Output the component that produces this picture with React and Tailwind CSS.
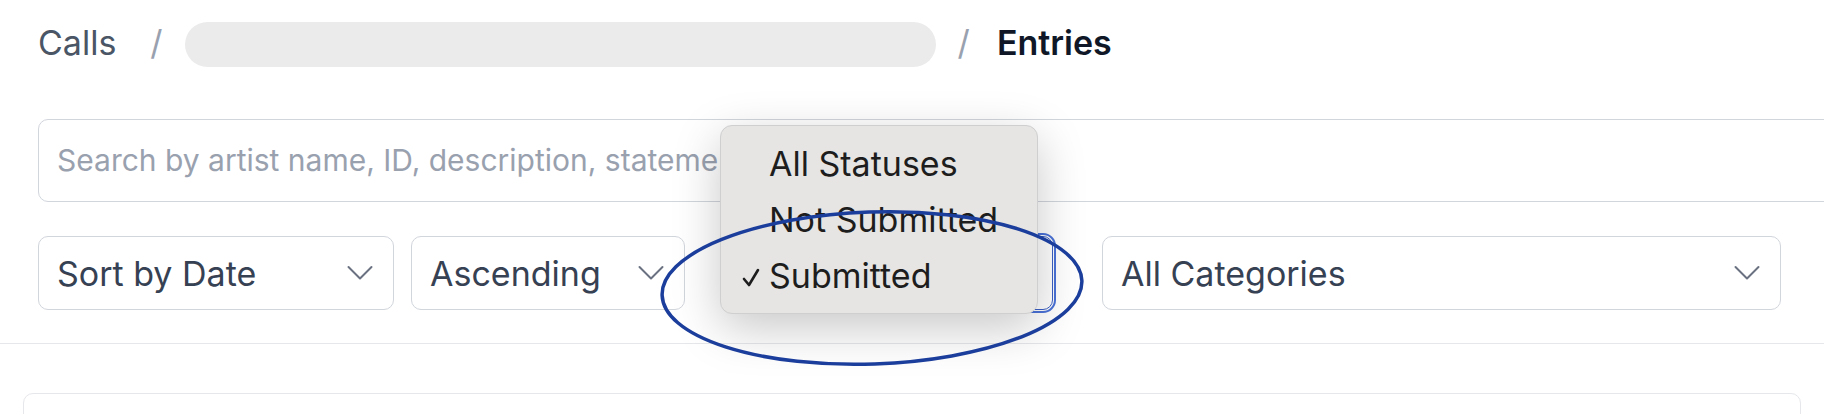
import React from 'react';

const Chevron = ({ className = '' }) => (
  <svg className={className} width="26" height="16" viewBox="0 0 26 16" fill="none">
    <path d="M1.5 2 L13 13.5 L24.5 2" stroke="currentColor" strokeWidth="2" strokeLinecap="round" strokeLinejoin="round" />
  </svg>
);

const SelectBox = ({ label, width, focused = false, className = '' }) => (
  <div
    className={`relative flex h-[74px] shrink-0 items-center justify-between rounded-[10px] border bg-white pl-[18px] pr-[20px] ${
      focused ? 'border-[#3b5fc4] outline outline-2 outline-offset-1 outline-[#4a72d8]' : 'border-gray-300'
    } ${className}`}
    style={{ width }}
  >
    <span className="text-[34px] text-gray-700">{label}</span>
    <Chevron className="text-gray-500" />
  </div>
);

const App = () => {
  const statuses = ['All Statuses', 'Not Submitted', 'Submitted'];

  return (
    <div className="relative h-[414px] w-[1824px] overflow-hidden bg-white" style={{ fontFamily: 'Inter, "Noto Sans", sans-serif' }}>
      <div className="px-[38px] pt-[22px] pb-[33px] border-b border-gray-200">
        {/* breadcrumb */}
        <div className="flex h-[45px] items-center">
          <span className="mb-[5px] text-[34px] text-gray-600">Calls</span>
          <span className="mb-[5px] ml-[34px] text-[34px] text-gray-400">/</span>
          <div className="ml-[22px] h-[45px] w-[751px] rounded-full bg-[#ebebeb]" />
          <span className="mb-[5px] ml-[22px] text-[34px] text-gray-400">/</span>
          <span className="mb-[5px] ml-[27px] text-[34px] font-semibold text-gray-900">Entries</span>
        </div>

        {/* search */}
        <div className="mt-[52px] flex h-[83px] w-[1860px] items-center rounded-[10px] border border-gray-300 pl-[18px]">
          <span className="whitespace-nowrap text-[30px] text-gray-400">Search by artist name, ID, description, statement...</span>
        </div>

        {/* filters */}
        <div className="mt-[34px] flex items-center">
          <SelectBox label="Sort by Date" width={356} />
          <SelectBox label="Ascending" width={274} className="ml-[17px]" />
          <SelectBox label="Submitted" width={328} focused className="ml-[40px]" />
          <SelectBox label="All Categories" width={679} className="ml-[49px]" />
        </div>
      </div>

      <div className="px-[23px] pt-[49px]">
        <div className="h-[60px] rounded-[10px] border border-gray-200" />
      </div>

      {/* native status popup */}
      <div className="absolute left-[720px] top-[125px] flex h-[189px] w-[318px] flex-col justify-center rounded-[12px] border border-[#cfcfcf] bg-[#e6e5e4] shadow-[0_14px_48px_rgba(0,0,0,0.22)]">
        {statuses.map((s) => (
          <div key={s} className="relative flex h-[56px] items-center pl-[48px] text-[34px] text-[#1d1d1d]">
            {s === 'Submitted' && (
              <svg className="absolute left-[21px] top-[20px]" width="18" height="19" viewBox="0 0 18 19" fill="none">
                <path d="M2 11 L7 17 L16 2" stroke="#1d1d1d" strokeWidth="2.6" strokeLinecap="round" strokeLinejoin="round" />
              </svg>
            )}
            {s}
          </div>
        ))}
      </div>

      {/* annotation */}
      <svg className="pointer-events-none absolute left-[655px] top-[206px]" width="440" height="166" viewBox="0 0 440 166">
        <ellipse cx="217" cy="82" rx="210" ry="76" fill="none" stroke="#1b3d9b" strokeWidth="3.5" transform="rotate(-2 217 82)" />
      </svg>
    </div>
  );
};

export default App;
